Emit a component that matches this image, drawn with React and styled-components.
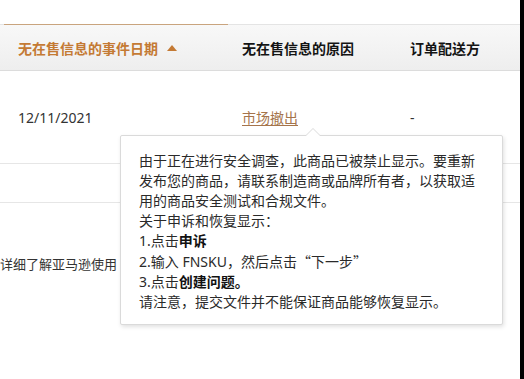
import React from "react";
import styled, { createGlobalStyle } from "styled-components";

const Global = createGlobalStyle`
  html, body { margin: 0; padding: 0; background: #fff; overflow: hidden; }
  body { font-family: "Noto Sans", "Noto Sans CJK SC", sans-serif; }
`;

const Frame = styled.div`
  display: flex;
  width: 524px;
  height: 379px;
`;

const Main = styled.div`
  position: relative;
  flex: 1;
  display: flex;
  flex-direction: column;
  padding-top: 24px;
  overflow: hidden;
`;

const Edge = styled.div`
  width: 4px;
  background: #000;
`;

const Grid = styled.div`
  display: grid;
  grid-template-columns: 4px 224px 168px 1fr;
`;

const HeaderRow = styled(Grid)`
  height: 45px;
  border-top: 1px solid #e4e4e4;
  border-bottom: 1px solid #dcdcdc;
  background: linear-gradient(#f8f8f8, #eeeeee);
`;

const HeadCell = styled.div`
  display: flex;
  align-items: center;
  gap: 9px;
  padding-left: 14px;
  font-size: 14px;
  font-weight: 700;
  color: ${(p) => (p.$active ? "#c47a34" : "#141414")};
  ${(p) => (p.$active ? "margin-top: -1px; border-top: 1px solid #c9a47e;" : "")}
`;

const Row = styled(Grid)`
  height: ${(p) => p.$h}px;
  border-bottom: 1px solid #e6e6e6;
`;

const Cell = styled.div`
  padding: 37px 0 0 14px;
  font-size: 14px;
  line-height: 20px;
  color: #333;
`;

const Link = styled.span`
  color: #a5744b;
  text-decoration: underline;
  text-underline-offset: 2px;
`;

const Note = styled.div`
  margin-top: 51px;
  font-size: 13px;
  line-height: 20px;
  color: #333;
  white-space: nowrap;
`;

const Popover = styled.div`
  position: absolute;
  left: 120px;
  top: 135px;
  width: 383px;
  box-sizing: border-box;
  padding: 15px 26px 12px 18px;
  background: #fff;
  border: 1px solid #dadada;
  border-radius: 2px;
  box-shadow: 1px 2px 4px rgba(0, 0, 0, 0.12);
  font-size: 14px;
  line-height: 20px;
  color: #2a2a2a;

  &::before,
  &::after {
    content: "";
    position: absolute;
    left: 184px;
    width: 0;
    height: 0;
    border-left: 8px solid transparent;
    border-right: 8px solid transparent;
  }
  &::before {
    top: -8px;
    border-bottom: 8px solid #dadada;
  }
  &::after {
    top: -7px;
    border-bottom: 8px solid #fff;
  }
`;

const Line = styled.div``;

const Strong = styled.b`
  font-weight: 700;
  color: #111;
`;

const Quote = styled.span`
  font-family: "Noto Sans CJK SC", sans-serif;
`;

function SortUp() {
  return (
    <svg width="10" height="6" viewBox="0 0 10 6">
      <path d="M0 6 L5 0 L10 6 Z" fill="#c47a34" />
    </svg>
  );
}

export default function App() {
  return (
    <>
      <Global />
      <Frame>
        <Main>
          <HeaderRow>
            <div />
            <HeadCell $active>
              无在售信息的事件日期 <SortUp />
            </HeadCell>
            <HeadCell>无在售信息的原因</HeadCell>
            <HeadCell>订单配送方</HeadCell>
          </HeaderRow>
          <Row $h={92}>
            <div />
            <Cell>12/11/2021</Cell>
            <Cell>
              <Link>市场撤出</Link>
            </Cell>
            <Cell>-</Cell>
          </Row>
          <Row $h={38}>
            <div />
            <div />
            <div />
            <div />
          </Row>
          <Note>详细了解亚马逊使用</Note>
          <Popover>
            <Line>
              由于正在进行安全调查，此商品已被禁止显示。要重新发布您的商品，请联系制造商或品牌所有者，以获取适用的商品安全测试和合规文件。
            </Line>
            <Line>关于申诉和恢复显示：</Line>
            <Line>
              1.点击<Strong>申诉</Strong>
            </Line>
            <Line>
              2.输入 FNSKU，然后点击<Quote>“下一步”</Quote>
            </Line>
            <Line>
              3.点击<Strong>创建问题。</Strong>
            </Line>
            <Line>请注意，提交文件并不能保证商品能够恢复显示。</Line>
          </Popover>
        </Main>
        <Edge />
      </Frame>
    </>
  );
}
